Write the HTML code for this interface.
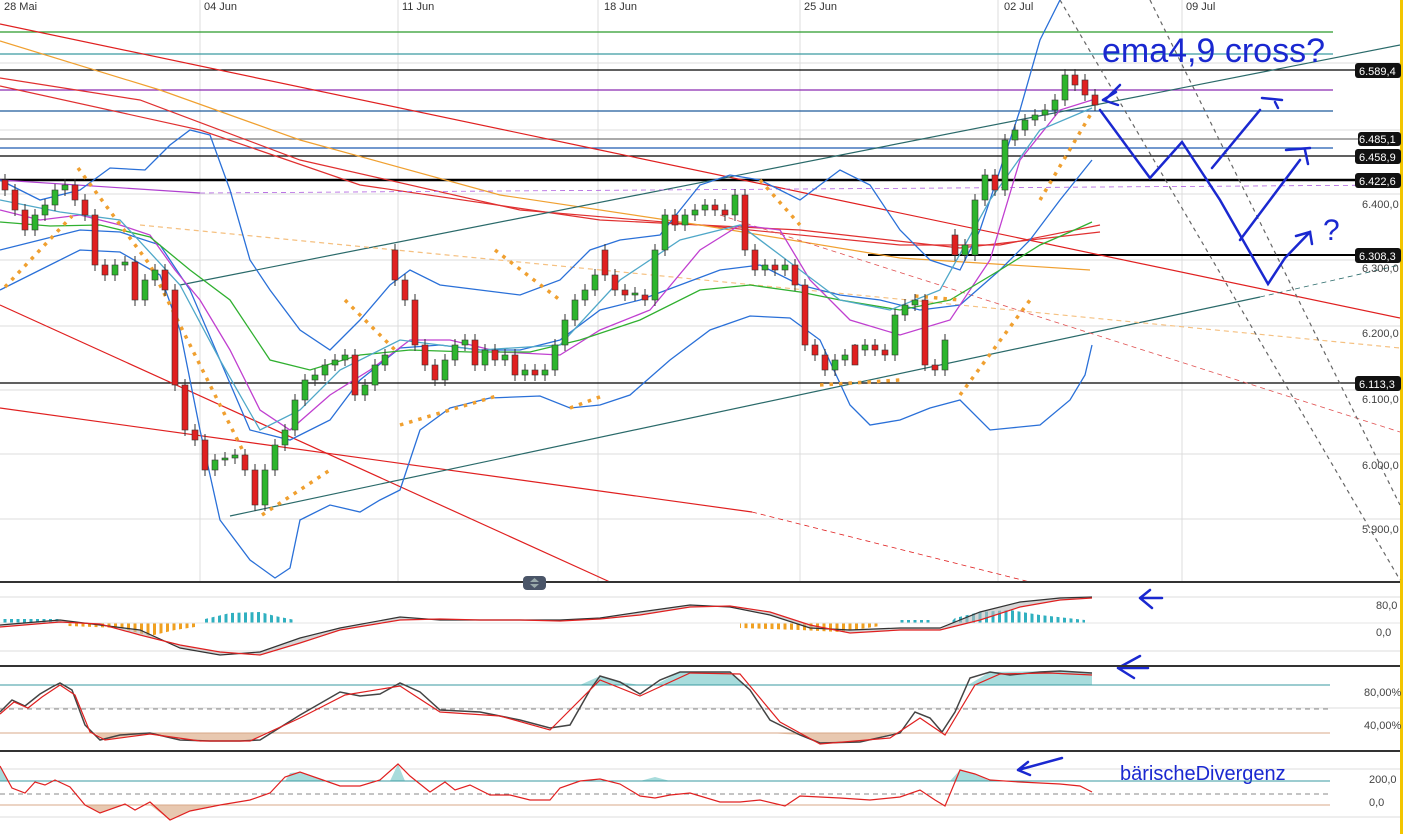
<!DOCTYPE html>
<html><head><meta charset="utf-8"><style>
html,body{margin:0;padding:0;background:#fff;overflow:hidden}
svg{display:block;font-family:"Liberation Sans",sans-serif}
</style></head><body>
<svg width="1403" height="834" viewBox="0 0 1403 834" xmlns="http://www.w3.org/2000/svg">
<rect width="1403" height="834" fill="#fff"/>
<rect x="1400" y="0" width="3" height="834" fill="#f2c500"/>
<g stroke="#dcdcdc" stroke-width="1">
<line x1="200" y1="0" x2="200" y2="582"/><line x1="398" y1="0" x2="398" y2="582"/><line x1="598" y1="0" x2="598" y2="582"/><line x1="800" y1="0" x2="800" y2="582"/><line x1="998" y1="0" x2="998" y2="582"/><line x1="1182" y1="0" x2="1182" y2="582"/>
<line x1="0" y1="63" x2="1400" y2="63"/><line x1="0" y1="130" x2="1400" y2="130"/><line x1="0" y1="194" x2="1400" y2="194"/><line x1="0" y1="260" x2="1400" y2="260"/><line x1="0" y1="326" x2="1400" y2="326"/><line x1="0" y1="390" x2="1400" y2="390"/><line x1="0" y1="454" x2="1400" y2="454"/><line x1="0" y1="519" x2="1400" y2="519"/>
<line x1="0" y1="597" x2="1400" y2="597"/><line x1="0" y1="651" x2="1400" y2="651"/>
<line x1="0" y1="708" x2="1400" y2="708"/><line x1="0" y1="769" x2="1400" y2="769"/><line x1="0" y1="817" x2="1400" y2="817"/>
</g>
<g font-size="11" fill="#333"><text x="4" y="10">28 Mai</text><text x="204" y="10">04 Jun</text><text x="402" y="10">11 Jun</text><text x="604" y="10">18 Jun</text><text x="804" y="10">25 Jun</text><text x="1004" y="10">02 Jul</text><text x="1186" y="10">09 Jul</text></g>
<g stroke-width="1.2">
<line x1="0" y1="32" x2="1333" y2="32" stroke="#2a9a2a"/>
<line x1="0" y1="54" x2="1333" y2="54" stroke="#3a9aa0"/>
<line x1="0" y1="70" x2="1400" y2="70" stroke="#000"/>
<line x1="0" y1="90" x2="1333" y2="90" stroke="#8a2ab0"/>
<line x1="0" y1="111" x2="1333" y2="111" stroke="#1e5a9a"/>
<line x1="0" y1="139" x2="1400" y2="139" stroke="#777"/>
<line x1="0" y1="148" x2="1333" y2="148" stroke="#1e5ab0"/>
<line x1="0" y1="156" x2="1400" y2="156" stroke="#000"/>
<line x1="0" y1="180" x2="1400" y2="180" stroke="#000" stroke-width="2.5"/>
<line x1="868" y1="255" x2="1400" y2="255" stroke="#000" stroke-width="2"/>
<line x1="0" y1="383" x2="1400" y2="383" stroke="#000"/>
</g>
<g fill="none" stroke-width="1.2">
<path d="M0 24 L600 150 L1400 318" stroke="#e02020"/>
<path d="M0 78 L140 100 L300 160 L520 210 L700 225 L900 245 L1000 245 L1100 225" stroke="#e03030"/>
<path d="M0 86 L200 130 L360 185 L600 220 L800 230 L960 248 L1100 232" stroke="#e03030"/>
<path d="M0 41 L160 90 L300 140 L500 195 L700 225 L900 258 L1090 270" stroke="#f0a030"/>
<path d="M0 305 L610 582" stroke="#e02020"/>
<path d="M0 408 L752 512" stroke="#e02020"/>
<path d="M752 512 L1030 582" stroke="#e02020" stroke-dasharray="5 4" stroke-width="0.8"/>
<path d="M230 516 L1260 297" stroke="#2a6a6a"/>
<path d="M1260 297 L1400 265" stroke="#2a6a6a" stroke-dasharray="5 4" stroke-width="0.8"/>
<path d="M180 285 L1400 45" stroke="#2a6a6a"/>
<path d="M0 180 L200 193" stroke="#b040d0"/>
<path d="M200 193 L1400 185" stroke="#b060e0" stroke-dasharray="5 4" stroke-width="0.8"/>
<path d="M140 225 L1400 348" stroke="#f5c080" stroke-dasharray="5 4"/>
<path d="M720 215 L1400 432" stroke="#e05050" stroke-dasharray="5 4" stroke-width="0.8"/>
<path d="M1060 0 L1400 580" stroke="#666" stroke-dasharray="4 4"/>
<path d="M1150 0 L1400 505" stroke="#666" stroke-dasharray="4 4"/>
</g>
<g fill="none" stroke-width="1.3">
<path d="M0 180 L40 200 L80 190 L110 168 L145 170 L170 145 L190 130 L210 135 L230 190 L250 260 L270 290 L300 330 L330 350 L360 320 L390 285 L410 270 L440 285 L480 290 L520 295 L560 280 L590 250 L620 240 L660 235 L700 185 L730 175 L760 180 L800 200 L840 170 L870 185 L900 230 L930 260 L960 270 L980 230 L1000 170 L1020 110 L1040 40 L1060 0" stroke="#2a70d8"/>
<path d="M0 290 L40 270 L80 250 L120 252 L160 275 L180 330 L200 430 L220 520 L250 560 L275 578 L290 568 L300 520 L330 505 L360 512 L380 500 L400 490 L420 430 L450 408 L490 398 L540 396 L570 408 L600 405 L630 395 L670 360 L710 330 L750 316 L790 318 L820 340 L850 405 L870 425 L900 420 L930 408 L960 400 L990 430 L1010 428 L1040 425 L1070 400 L1085 375 L1092 345" stroke="#2a70d8"/>
<path d="M0 250 L40 240 L80 230 L120 232 L160 245 L190 290 L220 360 L250 430 L290 440 L330 420 L360 380 L400 348 L440 345 L480 350 L520 350 L560 340 L600 310 L640 300 L680 285 L720 270 L760 265 L800 285 L840 295 L880 300 L920 310 L960 305 L1000 270 L1030 240 L1060 200 L1092 160" stroke="#2a70d8"/>
<path d="M0 210 L40 220 L80 215 L120 225 L150 235 L175 270 L200 300 L230 350 L260 410 L290 430 L330 395 L370 370 L410 340 L450 340 L500 352 L560 355 L600 330 L650 310 L700 250 L740 225 L780 230 L810 280 L850 320 L900 335 L950 320 L990 260 L1020 160 L1060 110 L1092 100" stroke="#c040d0"/>
<path d="M0 222 L50 226 L100 225 L150 237 L190 270 L230 300 L270 360 L310 370 L360 355 L410 350 L470 352 L530 352 L580 340 L640 320 L700 290 L750 285 L800 292 L840 300 L900 310 L950 300 L1000 270 L1040 245 L1070 232 L1092 222" stroke="#30b030"/>
<path d="M0 200 L60 212 L120 220 L180 285 L220 360 L260 430 L300 410 L340 370 L400 340 L480 350 L560 345 L620 280 L680 240 L740 225 L800 270 L840 300 L890 310 L940 290 L990 200 L1040 130 L1092 108" stroke="#50a8c8"/>
</g>
<!-- SAR dots -->
<g fill="none" stroke="#f0a030" stroke-width="3.5" stroke-dasharray="3.5 6">
<path d="M5 287 L72 216"/><path d="M78 168 L150 265 L245 455"/><path d="M262 515 L330 470"/><path d="M345 300 L395 350"/><path d="M400 425 L500 395"/><path d="M495 250 L560 300"/><path d="M570 408 L605 395"/><path d="M760 180 L800 225"/><path d="M820 385 L900 380"/><path d="M915 296 L960 300"/><path d="M960 395 L1030 300"/><path d="M1040 200 L1092 112"/>
</g>
<!-- candles -->
<path stroke="#333" stroke-width="1" fill="none" d="M5 174V196M15 184V216M25 204V236M35 209V236M45 199V221M55 184V211M65 179V196M75 179V206M85 194V221M95 209V271M105 259V281M115 259V281M125 256V271M135 256V306M145 274V306M155 264V286M165 264V296M175 284V391M185 379V436M195 424V446M205 434V476M215 454V476M225 452V466M235 449V464M245 449V476M255 464V511M265 464V511M275 439V476M285 424V451M295 394V436M305 374V406M315 369V386M325 359V381M335 354V371M345 349V366M355 349V401M365 379V401M375 359V391M385 349V371M395 244V286M405 274V306M415 294V351M425 339V371M435 359V386M445 354V386M455 339V366M465 334V351M475 334V371M485 344V371M495 344V366M505 349V366M515 349V381M525 364V381M535 364V381M545 364V381M555 339V376M565 314V351M575 294V326M585 284V306M595 269V296M605 244V281M615 269V296M625 284V301M635 287V301M645 289V306M655 244V306M665 209V256M675 209V231M685 209V231M695 204V221M705 199V216M715 199V216M725 204V221M735 189V221M745 189V256M755 244V276M765 259V276M775 259V276M785 259V276M795 259V291M805 279V351M815 339V361M825 349V376M835 354V376M845 349V366M855 344V361M865 339V356M875 339V356M885 344V361M895 309V361M905 299V321M915 294V311M925 294V371M935 359V376M945 334V376M955 229V261M965 239V261M975 194V261M985 169V206M995 169V196M1005 134V196M1015 124V146M1025 114V136M1035 109V126M1045 104V121M1055 94V116M1065 69V106M1075 69V91M1085 74V101M1095 89V111"/>
<g fill="#e02020" stroke="#333" stroke-width="0.6">
<rect x="2" y="180" width="6" height="10"/><rect x="12" y="190" width="6" height="20"/><rect x="22" y="210" width="6" height="20"/><rect x="72" y="185" width="6" height="15"/><rect x="82" y="200" width="6" height="15"/><rect x="92" y="215" width="6" height="50"/><rect x="102" y="265" width="6" height="10"/><rect x="132" y="262" width="6" height="38"/><rect x="162" y="270" width="6" height="20"/><rect x="172" y="290" width="6" height="95"/><rect x="182" y="385" width="6" height="45"/><rect x="192" y="430" width="6" height="10"/><rect x="202" y="440" width="6" height="30"/><rect x="242" y="455" width="6" height="15"/><rect x="252" y="470" width="6" height="35"/><rect x="352" y="355" width="6" height="40"/><rect x="392" y="250" width="6" height="30"/><rect x="402" y="280" width="6" height="20"/><rect x="412" y="300" width="6" height="45"/><rect x="422" y="345" width="6" height="20"/><rect x="432" y="365" width="6" height="15"/><rect x="472" y="340" width="6" height="25"/><rect x="492" y="350" width="6" height="10"/><rect x="512" y="355" width="6" height="20"/><rect x="532" y="370" width="6" height="5"/><rect x="602" y="250" width="6" height="25"/><rect x="612" y="275" width="6" height="15"/><rect x="622" y="290" width="6" height="5"/><rect x="642" y="295" width="6" height="5"/><rect x="672" y="215" width="6" height="10"/><rect x="712" y="205" width="6" height="5"/><rect x="722" y="210" width="6" height="5"/><rect x="742" y="195" width="6" height="55"/><rect x="752" y="250" width="6" height="20"/><rect x="772" y="265" width="6" height="5"/><rect x="792" y="265" width="6" height="20"/><rect x="802" y="285" width="6" height="60"/><rect x="812" y="345" width="6" height="10"/><rect x="822" y="355" width="6" height="15"/><rect x="852" y="345" width="6" height="20"/><rect x="872" y="345" width="6" height="5"/><rect x="882" y="350" width="6" height="5"/><rect x="922" y="300" width="6" height="65"/><rect x="932" y="365" width="6" height="5"/><rect x="952" y="235" width="6" height="20"/><rect x="992" y="175" width="6" height="15"/><rect x="1072" y="75" width="6" height="10"/><rect x="1082" y="80" width="6" height="15"/><rect x="1092" y="95" width="6" height="10"/>
</g>
<g fill="#2db52d" stroke="#333" stroke-width="0.6">
<rect x="32" y="215" width="6" height="15"/><rect x="42" y="205" width="6" height="10"/><rect x="52" y="190" width="6" height="15"/><rect x="62" y="185" width="6" height="5"/><rect x="112" y="265" width="6" height="10"/><rect x="122" y="262" width="6" height="3"/><rect x="142" y="280" width="6" height="20"/><rect x="152" y="270" width="6" height="10"/><rect x="212" y="460" width="6" height="10"/><rect x="222" y="458" width="6" height="2"/><rect x="232" y="455" width="6" height="3"/><rect x="262" y="470" width="6" height="35"/><rect x="272" y="445" width="6" height="25"/><rect x="282" y="430" width="6" height="15"/><rect x="292" y="400" width="6" height="30"/><rect x="302" y="380" width="6" height="20"/><rect x="312" y="375" width="6" height="5"/><rect x="322" y="365" width="6" height="10"/><rect x="332" y="360" width="6" height="5"/><rect x="342" y="355" width="6" height="5"/><rect x="362" y="385" width="6" height="10"/><rect x="372" y="365" width="6" height="20"/><rect x="382" y="355" width="6" height="10"/><rect x="442" y="360" width="6" height="20"/><rect x="452" y="345" width="6" height="15"/><rect x="462" y="340" width="6" height="5"/><rect x="482" y="350" width="6" height="15"/><rect x="502" y="355" width="6" height="5"/><rect x="522" y="370" width="6" height="5"/><rect x="542" y="370" width="6" height="5"/><rect x="552" y="345" width="6" height="25"/><rect x="562" y="320" width="6" height="25"/><rect x="572" y="300" width="6" height="20"/><rect x="582" y="290" width="6" height="10"/><rect x="592" y="275" width="6" height="15"/><rect x="632" y="293" width="6" height="2"/><rect x="652" y="250" width="6" height="50"/><rect x="662" y="215" width="6" height="35"/><rect x="682" y="215" width="6" height="10"/><rect x="692" y="210" width="6" height="5"/><rect x="702" y="205" width="6" height="5"/><rect x="732" y="195" width="6" height="20"/><rect x="762" y="265" width="6" height="5"/><rect x="782" y="265" width="6" height="5"/><rect x="832" y="360" width="6" height="10"/><rect x="842" y="355" width="6" height="5"/><rect x="862" y="345" width="6" height="5"/><rect x="892" y="315" width="6" height="40"/><rect x="902" y="305" width="6" height="10"/><rect x="912" y="300" width="6" height="5"/><rect x="942" y="340" width="6" height="30"/><rect x="962" y="245" width="6" height="10"/><rect x="972" y="200" width="6" height="55"/><rect x="982" y="175" width="6" height="25"/><rect x="1002" y="140" width="6" height="50"/><rect x="1012" y="130" width="6" height="10"/><rect x="1022" y="120" width="6" height="10"/><rect x="1032" y="115" width="6" height="5"/><rect x="1042" y="110" width="6" height="5"/><rect x="1052" y="100" width="6" height="10"/><rect x="1062" y="75" width="6" height="25"/>
</g>
<!-- hand drawn -->
<g fill="none" stroke="#1a28d0" stroke-width="2.5" stroke-linecap="round">
<path d="M1100 110 L1150 178 L1182 142 L1220 200 L1268 284 L1285 258 L1310 232"/>
<path d="M1296 236 L1310 232 L1312 244"/>
<path d="M1212 168 L1260 110 M1262 98 L1282 100 M1275 102 L1278 108"/>
<path d="M1240 240 L1300 160 M1286 150 L1310 148 M1305 150 L1308 164"/>
<path d="M1105 100 L1120 85 M1103 100 L1118 105 M1103 100 L1116 92"/>
<path d="M1140 598 L1162 598 M1140 598 L1150 590 M1140 598 L1152 608"/>
<path d="M1118 668 L1148 668 M1118 668 L1140 656 M1118 668 L1134 678"/>
<path d="M1018 770 L1062 758 M1018 770 L1028 762 M1018 770 L1030 775"/>
</g>
<g fill="#1a28d0" font-family="'Liberation Sans',sans-serif">
<text x="1102" y="62" font-size="34">ema4,9 cross?</text>
<text x="1323" y="240" font-size="30">?</text>
<text x="1120" y="780" font-size="20">bärischeDivergenz</text>
</g>
<g font-size="11">
<rect x="1355" y="63" width="46" height="15" rx="3" fill="#111"/><text x="1359" y="75" fill="#fff">6.589,4</text>
<rect x="1358" y="132" width="43" height="14" rx="3" fill="#111"/><text x="1359" y="143" fill="#fff">6.485,1</text>
<rect x="1355" y="149" width="46" height="15" rx="3" fill="#111"/><text x="1359" y="161" fill="#fff">6.458,9</text>
<rect x="1355" y="173" width="46" height="15" rx="3" fill="#111"/><text x="1359" y="185" fill="#fff">6.422,6</text>
<rect x="1355" y="248" width="46" height="15" rx="3" fill="#111"/><text x="1359" y="260" fill="#fff">6.308,3</text>
<rect x="1355" y="376" width="46" height="15" rx="3" fill="#111"/><text x="1359" y="388" fill="#fff">6.113,3</text>
<g fill="#444"><text x="1362" y="208">6.400,0</text><text x="1362" y="272">6.300,0</text><text x="1362" y="337">6.200,0</text><text x="1362" y="403">6.100,0</text><text x="1362" y="469">6.000,0</text><text x="1362" y="533">5.900,0</text>
<text x="1376" y="609">80,0</text><text x="1376" y="636">0,0</text><text x="1364" y="696">80,00%</text><text x="1364" y="729">40,00%</text><text x="1369" y="783">200,0</text><text x="1369" y="806">0,0</text></g>
</g>
<g stroke="#333" stroke-width="2"><line x1="0" y1="582" x2="1400" y2="582"/><line x1="0" y1="666" x2="1400" y2="666"/><line x1="0" y1="751" x2="1400" y2="751"/></g>
<rect x="523" y="576" width="23" height="14" rx="4" fill="#4a5568"/><path d="M530 582 L534.5 578 L539 582 Z M530 584 L534.5 588 L539 584 Z" fill="#9aa"/>
<!-- MACD hist -->
<g fill="#30b0c0"><path d="M0 623 L0 619 L60 619 L60 623Z"/><path d="M205 623 L205 619 L230 613 L260 612 L275 616 L295 620 L295 623Z"/><path d="M900 623 L900 620 L930 620 L930 623Z"/><path d="M950 623 L955 618 L980 612 L1010 610 L1040 615 L1085 620 L1085 623Z"/></g>
<g fill="#f0a020"><path d="M68 623 L68 626 L120 628 L150 636 L175 630 L195 627 L195 623Z"/><path d="M740 623 L740 628 L800 630 L840 632 L880 626 L880 623Z"/></g>
<line x1="0" y1="623" x2="1100" y2="623" stroke="#fff" stroke-width="30" stroke-dasharray="3.5 3"/>
<line x1="0" y1="623" x2="1400" y2="623" stroke="#e4e4e4"/>
<path d="M0 625 L60 620 L100 625 L140 630 L180 648 L220 655 L260 652 L300 638 L340 628 L400 617 L440 620 L480 620 L520 620 L560 620 L600 618 L640 612 L690 605 L730 607 L770 615 L810 628 L850 630 L900 628 L940 628 L980 612 L1020 602 L1060 598 L1092 597 L1092 598 L1060 600 L1020 607 L980 620 L940 630 L900 630 L850 633 L810 625 L770 612 L730 606 L690 607 L640 615 L600 619 L560 621 L520 620 L480 620 L440 619 L400 620 L340 630 L300 643 L260 655 L220 652 L180 645 L140 635 L100 624 L60 622 L0 627Z" fill="#bbb" fill-opacity="0.6"/>
<path d="M0 625 L60 620 L100 625 L140 630 L180 648 L220 655 L260 652 L300 638 L340 628 L400 617 L440 620 L480 620 L520 620 L560 620 L600 618 L640 612 L690 605 L730 607 L770 615 L810 628 L850 630 L900 628 L940 628 L980 612 L1020 602 L1060 598 L1092 597" fill="none" stroke="#333" stroke-width="1.2"/>
<path d="M0 627 L60 622 L100 624 L140 635 L180 645 L220 652 L260 655 L300 643 L340 630 L400 620 L440 619 L480 620 L520 620 L560 621 L600 619 L640 615 L690 607 L730 606 L770 612 L810 625 L850 633 L900 630 L940 630 L980 620 L1020 607 L1060 600 L1092 598" fill="none" stroke="#e02020" stroke-width="1.2"/>
<!-- stoch -->
<path d="M580 685 L600 676 L620 682 L640 685Z M655 685 L680 672 L730 672 L745 685Z M968 685 L990 672 L1060 671 L1092 673 L1092 685Z" fill="#a8dcdc"/>
<path d="M95 733 L105 740 L150 734 L200 741 L250 741 L265 733Z M770 733 L800 735 L820 743 L860 742 L895 733Z" fill="#e8c8b0"/>
<line x1="0" y1="685" x2="1330" y2="685" stroke="#3a9aa0"/>
<line x1="0" y1="709" x2="1330" y2="709" stroke="#888" stroke-dasharray="5 4"/>
<line x1="0" y1="733" x2="1330" y2="733" stroke="#d8a888"/>
<path d="M0 712 L12 700 L25 706 L40 694 L52 687 L60 683 L72 690 L85 725 L100 740 L120 735 L150 733 L180 740 L210 741 L240 741 L260 740 L300 715 L340 692 L360 696 L380 694 L400 683 L420 692 L440 710 L480 712 L520 720 L550 728 L570 725 L590 690 L600 676 L620 682 L640 694 L660 680 L680 672 L700 672 L730 672 L750 690 L770 720 L800 735 L820 743 L860 742 L900 733 L915 712 L930 718 L942 732 L955 712 L970 678 L990 672 L1010 675 L1040 672 L1060 671 L1092 673" fill="none" stroke="#444" stroke-width="1.5"/>
<path d="M0 714 L14 702 L28 708 L42 697 L60 685 L75 695 L90 732 L105 740 L150 734 L200 741 L250 741 L300 718 L345 695 L400 686 L440 712 L500 716 L550 730 L600 680 L640 696 L690 673 L740 674 L780 722 L820 744 L890 738 L920 718 L945 735 L975 685 L1000 674 L1050 673 L1092 675" fill="none" stroke="#e02020" stroke-width="1.2"/>
<!-- CCI -->
<path d="M0 766 L8 781 L0 781Z M285 781 L290 773 L300 772 L320 779 L322 781Z M390 781 L398 764 L405 781Z M640 781 L655 777 L670 781Z M950 781 L960 770 L975 774 L990 781Z" fill="#a8dcdc"/>
<path d="M85 805 L100 813 L125 805Z M150 805 L170 820 L190 811 L215 805Z" fill="#e8c8b0"/>
<line x1="0" y1="781" x2="1330" y2="781" stroke="#3a9aa0"/>
<line x1="0" y1="794" x2="1330" y2="794" stroke="#888" stroke-dasharray="5 4"/>
<line x1="0" y1="805" x2="1330" y2="805" stroke="#d8a888"/>
<path d="M0 766 L12 788 L25 793 L35 782 L45 785 L55 780 L70 787 L85 805 L100 813 L125 804 L135 810 L150 802 L170 820 L190 811 L220 805 L250 800 L270 793 L285 777 L300 772 L320 779 L340 786 L360 786 L380 780 L398 764 L410 776 L430 792 L445 782 L455 790 L470 785 L490 795 L510 795 L530 800 L550 800 L560 788 L580 781 L600 779 L620 784 L640 796 L655 798 L670 795 L690 793 L720 802 L740 802 L760 800 L785 806 L800 796 L840 798 L870 800 L900 797 L920 790 L935 800 L945 806 L960 770 L975 774 L990 780 L1020 782 L1060 784 L1080 786 L1092 792" fill="none" stroke="#e02020" stroke-width="1.2"/>
</svg>
</body></html>
